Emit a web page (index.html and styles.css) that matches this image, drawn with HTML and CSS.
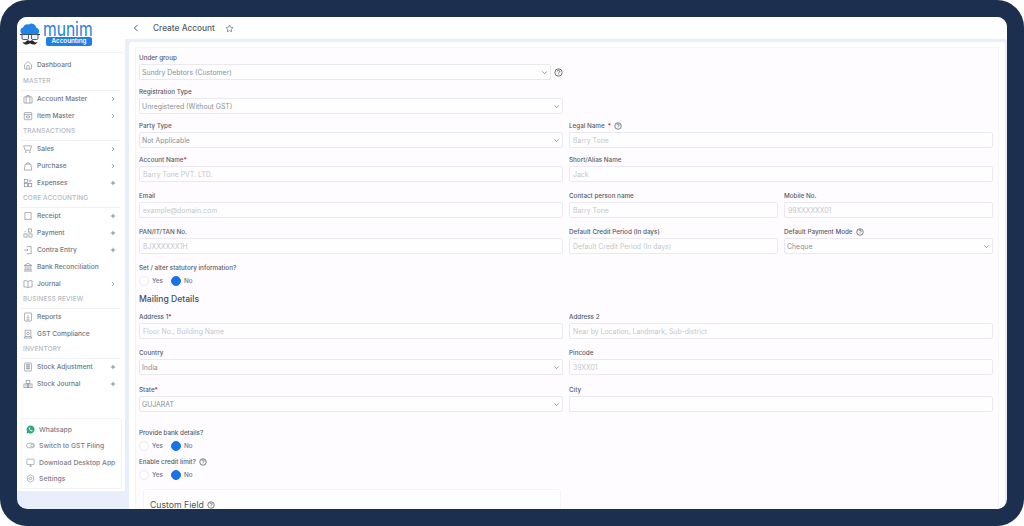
FILE: index.html
```html
<!DOCTYPE html>
<html lang="en">
<head>
<meta charset="utf-8">
<title>Create Account</title>
<link rel="stylesheet" href="styles.css">
</head>
<body>
<svg class="defs" width="0" height="0" aria-hidden="true">
  <defs>
    <symbol id="i-home" viewBox="0 0 16 16"><path d="M2.500 7.500 8 2.500l5.500 5v6a1 1 0 0 1-1 1h-9a1 1 0 0 1-1-1z"/><path d="M6 14v-3.500a2 2 0 0 1 4 0V14"/></symbol>
    <symbol id="i-account" viewBox="0 0 16 16"><rect x="1.500" y="4.500" width="13" height="10" rx="1"/><path d="M5 4.500v10M11 4.500v10M6 4.500V2.500h4v2"/></symbol>
    <symbol id="i-item" viewBox="0 0 16 16"><rect x="2" y="2.500" width="12" height="11.500" rx="1"/><path d="M2 5.500h12M5.500 8h5v3h-5z"/></symbol>
    <symbol id="i-cart" viewBox="0 0 16 16"><path d="M1 3h12.500l-1.500 7H3.500z"/><circle cx="4.500" cy="13" r=".8"/><circle cx="11" cy="13" r=".8"/></symbol>
    <symbol id="i-bag" viewBox="0 0 16 16"><path d="M3.500 5h9l1.500 9.500H2z"/><path d="M5.500 5a2.500 2.500 0 0 1 5 0"/></symbol>
    <symbol id="i-exp" viewBox="0 0 16 16"><rect x="2" y="2" width="5" height="5"/><rect x="2" y="9" width="5" height="5"/><rect x="9" y="9" width="5" height="5"/><path d="M9 3.500h5M9 6h4"/></symbol>
    <symbol id="i-receipt" viewBox="0 0 16 16"><path d="M3 2.500h10v11.500l-2-1-3 1-3-1-2 1z"/></symbol>
    <symbol id="i-pay" viewBox="0 0 16 16"><rect x="8.500" y="1.500" width="5" height="5"/><rect x="1.500" y="9.500" width="5" height="5"/><rect x="9.500" y="9.500" width="5" height="5"/><path d="M2 7l3-3"/></symbol>
    <symbol id="i-contra" viewBox="0 0 16 16"><path d="M6 2.500h7v11.500H6"/><path d="M2 8h6M6 6l2 2-2 2"/></symbol>
    <symbol id="i-bank" viewBox="0 0 16 16"><path d="M2 5.500 8 2l6 3.500zM3.500 6v6M6.500 6v6M9.500 6v6M12.500 6v6M2 12.500h12M1.500 14.500h13"/></symbol>
    <symbol id="i-book" viewBox="0 0 16 16"><path d="M8 4c-1.500-1.200-4-1.500-6.500-1.200v10c2.500-.3 5 0 6.500 1.200 1.500-1.200 4-1.500 6.500-1.200v-10C12 2.500 9.500 2.800 8 4zM8 4v10"/></symbol>
    <symbol id="i-report" viewBox="0 0 16 16"><rect x="2.500" y="1.500" width="11" height="13" rx="1"/><path d="M8 5v5M6 8.500 8 10.500l2-2M5.500 12.500h5"/></symbol>
    <symbol id="i-gst" viewBox="0 0 16 16"><path d="M3.500 13V2h9v11"/><circle cx="8" cy="7" r="2"/><path d="M1.500 14.500h13l-2-2.500h-9z"/></symbol>
    <symbol id="i-stock" viewBox="0 0 16 16"><rect x="2.500" y="1.500" width="11" height="13" rx="1.500"/><path d="M5 4.500h6M5 7.500h6M5 10.500h6M6.500 3v9M9.500 3v9"/></symbol>
    <symbol id="i-journal" viewBox="0 0 16 16"><rect x="5" y="2" width="6" height="5"/><rect x="1.500" y="8" width="6" height="6"/><rect x="8.500" y="8" width="6" height="6"/><path d="M3 11h3M10 11h3"/></symbol>
    <symbol id="i-right" viewBox="0 0 16 16"><path d="m5.500 3 5 5-5 5"/></symbol>
    <symbol id="i-plus" viewBox="0 0 16 16"><path d="M8 2v12M2 8h12"/></symbol>
    <symbol id="i-down" viewBox="0 0 16 16"><path d="m3 5.500 5 5 5-5"/></symbol>
    <symbol id="i-help" viewBox="0 0 16 16"><circle cx="8" cy="8" r="6.500"/><path d="M5.800 6.200a2.200 2.200 0 1 1 3.300 1.900c-.7.400-1.100.8-1.100 1.600M8 11.300v.7"/></symbol>
    <symbol id="i-toggle" viewBox="0 0 16 16"><rect x="1" y="4" width="14" height="8" rx="4"/><circle cx="11" cy="8" r="2.500"/></symbol>
    <symbol id="i-monitor" viewBox="0 0 16 16"><rect x="1.500" y="2" width="13" height="9.500" rx="1"/><path d="M5 14.500h6M8 11.500v3"/></symbol>
    <symbol id="i-gear" viewBox="0 0 16 16"><path d="M8 1.500 13.500 4.500v7L8 14.500 2.500 11.500v-7z"/><circle cx="8" cy="8" r="2.200"/></symbol>
  </defs>
</svg>
<div class="frame">
  <div class="app">
    <aside class="side">
      <div class="side-panel">
        <div class="logo">
          <svg class="logo-mark" viewBox="0 0 20 24" aria-hidden="true">
            <path class="m-cloud" d="M3.800 12.500a3.500 3.500 0 0 1-.7-6.900 4.300 4.300 0 0 1 5.700-3.100 4.700 4.700 0 0 1 7.500 3.200 3.500 3.500 0 0 1 .4 6.800z"/>
            <path class="m-bar" d="M0 12.500h20"/>
            <rect class="m-glass" x="2" y="12.500" width="6.500" height="5" rx="1.200"/>
            <rect class="m-glass" x="11.500" y="12.500" width="6.500" height="5" rx="1.200"/>
            <path class="m-stache" d="M10 19.200c1.200-1.400 2.800-1.400 3.700.1.800 1.300 2.500 1.500 3.800.4-.7 2.900-4.500 3.900-7.500 1.500-3 2.400-6.800 1.400-7.500-1.500 1.300 1.100 3 .9 3.800-.4.900-1.500 2.500-1.500 3.700-.1z"/>
          </svg>
          <div class="logo-text">
            <span class="logo-name">munim</span>
            <span class="logo-badge">Accounting</span>
          </div>
        </div>
        <nav class="nav">
          <a class="nav-row"><svg class="ic"><use href="#i-home"/></svg><span class="nav-text">Dashboard</span></a>
          <div class="nav-head">MASTER</div>
          <a class="nav-row"><svg class="ic"><use href="#i-account"/></svg><span class="nav-text">Account Master</span><svg class="act"><use href="#i-right"/></svg></a>
          <a class="nav-row"><svg class="ic"><use href="#i-item"/></svg><span class="nav-text">Item Master</span><svg class="act"><use href="#i-right"/></svg></a>
          <div class="nav-head">TRANSACTIONS</div>
          <a class="nav-row"><svg class="ic"><use href="#i-cart"/></svg><span class="nav-text">Sales</span><svg class="act"><use href="#i-right"/></svg></a>
          <a class="nav-row"><svg class="ic"><use href="#i-bag"/></svg><span class="nav-text">Purchase</span><svg class="act"><use href="#i-right"/></svg></a>
          <a class="nav-row"><svg class="ic"><use href="#i-exp"/></svg><span class="nav-text">Expenses</span><svg class="act"><use href="#i-plus"/></svg></a>
          <div class="nav-head">CORE ACCOUNTING</div>
          <a class="nav-row"><svg class="ic"><use href="#i-receipt"/></svg><span class="nav-text">Receipt</span><svg class="act"><use href="#i-plus"/></svg></a>
          <a class="nav-row"><svg class="ic"><use href="#i-pay"/></svg><span class="nav-text">Payment</span><svg class="act"><use href="#i-plus"/></svg></a>
          <a class="nav-row"><svg class="ic"><use href="#i-contra"/></svg><span class="nav-text">Contra Entry</span><svg class="act"><use href="#i-plus"/></svg></a>
          <a class="nav-row"><svg class="ic"><use href="#i-bank"/></svg><span class="nav-text">Bank Reconciliation</span></a>
          <a class="nav-row"><svg class="ic"><use href="#i-book"/></svg><span class="nav-text">Journal</span><svg class="act"><use href="#i-right"/></svg></a>
          <div class="nav-head">BUSINESS REVIEW</div>
          <a class="nav-row"><svg class="ic"><use href="#i-report"/></svg><span class="nav-text">Reports</span></a>
          <a class="nav-row"><svg class="ic"><use href="#i-gst"/></svg><span class="nav-text">GST Compliance</span></a>
          <div class="nav-head">INVENTORY</div>
          <a class="nav-row"><svg class="ic"><use href="#i-stock"/></svg><span class="nav-text">Stock Adjustment</span><svg class="act"><use href="#i-plus"/></svg></a>
          <a class="nav-row"><svg class="ic"><use href="#i-journal"/></svg><span class="nav-text">Stock Journal</span><svg class="act"><use href="#i-plus"/></svg></a>
        </nav>
        <div class="side-foot">
          <a class="foot-row"><svg class="ic-wa" viewBox="0 0 16 16" aria-hidden="true"><path d="M8 1a7 7 0 0 0-6 10.500L1 15l3.600-1A7 7 0 1 0 8 1z"/><path class="wa-in" d="M5.500 4.500c-1 1-.8 2.700.7 4.500s3.200 2.800 4.600 2.200c.8-.4 1-1 1-1.500L10.200 8.800l-.9.900c-1-.4-2-1.400-2.500-2.600l.8-.8-.8-1.900z"/></svg><span>Whatsapp</span></a>
          <a class="foot-row"><svg class="ic"><use href="#i-toggle"/></svg><span>Switch to GST Filing</span></a>
          <a class="foot-row"><svg class="ic"><use href="#i-monitor"/></svg><span>Download Desktop App</span></a>
          <a class="foot-row"><svg class="ic"><use href="#i-gear"/></svg><span>Settings</span></a>
        </div>
      </div>
    </aside>
    <main class="main">
      <header class="top">
        <svg class="top-back"><use href="#i-right"/></svg>
        <h1 class="top-title">Create Account</h1>
        <svg class="top-star" viewBox="0 0 16 16" aria-hidden="true"><path d="m8 1.800 1.900 4 4.400.6-3.200 3 .8 4.400L8 11.700l-3.900 2.100.8-4.400-3.200-3 4.400-.6z"/></svg>
      </header>
      <div class="card">
        <form class="form">
          <div class="grid">
            <div class="field">
              <label class="lbl">Under group</label>
              <div class="with-help">
                <div class="ctl sel"><span>Sundry Debtors (Customer)</span><svg class="chev"><use href="#i-down"/></svg></div>
                <svg class="help"><use href="#i-help"/></svg>
              </div>
            </div>
          </div>
          <div class="grid">
            <div class="field">
              <label class="lbl">Registration Type</label>
              <div class="ctl sel"><span>Unregistered (Without GST)</span><svg class="chev"><use href="#i-down"/></svg></div>
            </div>
          </div>
          <div class="grid">
            <div class="field">
              <label class="lbl">Party Type</label>
              <div class="ctl sel"><span>Not Applicable</span><svg class="chev"><use href="#i-down"/></svg></div>
            </div>
            <div class="field">
              <label class="lbl">Legal Name <b class="req req-gap">*</b><svg class="help-sm"><use href="#i-help"/></svg></label>
              <div class="ctl ph"><span>Barry Tone</span></div>
            </div>
          </div>
          <div class="grid">
            <div class="field">
              <label class="lbl">Account Name<b class="req">*</b></label>
              <div class="ctl ph"><span>Barry Tone PVT. LTD.</span></div>
            </div>
            <div class="field">
              <label class="lbl">Short/Alias Name</label>
              <div class="ctl ph"><span>Jack</span></div>
            </div>
          </div>
          <div class="grid wide">
            <div class="field">
              <label class="lbl">Email</label>
              <div class="ctl ph"><span>example@domain.com</span></div>
            </div>
            <div class="sub">
              <div class="field">
                <label class="lbl">Contact person name</label>
                <div class="ctl ph"><span>Barry Tone</span></div>
              </div>
              <div class="field">
                <label class="lbl">Mobile No.</label>
                <div class="ctl ph"><span>99XXXXXX01</span></div>
              </div>
            </div>
          </div>
          <div class="grid wide">
            <div class="field">
              <label class="lbl">PAN/IT/TAN No.</label>
              <div class="ctl ph"><span>BJXXXXXX1H</span></div>
            </div>
            <div class="sub">
              <div class="field">
                <label class="lbl">Default Credit Period (In days)</label>
                <div class="ctl ph"><span>Default Credit Period (In days)</span></div>
              </div>
              <div class="field">
                <label class="lbl">Default Payment Mode<svg class="help-sm"><use href="#i-help"/></svg></label>
                <div class="ctl sel"><span>Cheque</span><svg class="chev"><use href="#i-down"/></svg></div>
              </div>
            </div>
          </div>
          <div class="radio-field wide">
            <label class="lbl">Set / alter statutory information?</label>
            <div class="radios"><span class="radio"></span><span class="radio-text">Yes</span><span class="radio on"></span><span class="radio-text">No</span></div>
          </div>
          <h2 class="sec">Mailing Details</h2>
          <div class="grid addr">
            <div class="field">
              <label class="lbl">Address 1<b class="req">*</b></label>
              <div class="ctl ph"><span>Floor No., Building Name</span></div>
            </div>
            <div class="field">
              <label class="lbl">Address 2</label>
              <div class="ctl ph"><span>Near by Location, Landmark, Sub-district</span></div>
            </div>
          </div>
          <div class="grid wide-b">
            <div class="field">
              <label class="lbl">Country</label>
              <div class="ctl sel"><span>India</span><svg class="chev"><use href="#i-down"/></svg></div>
            </div>
            <div class="field">
              <label class="lbl">Pincode</label>
              <div class="ctl ph"><span>39XX01</span></div>
            </div>
          </div>
          <div class="grid wide-b state">
            <div class="field">
              <label class="lbl">State<b class="req">*</b></label>
              <div class="ctl sel"><span>GUJARAT</span><svg class="chev"><use href="#i-down"/></svg></div>
            </div>
            <div class="field">
              <label class="lbl">City</label>
              <div class="ctl ph"></div>
            </div>
          </div>
          <div class="radio-field bank">
            <label class="lbl">Provide bank details?</label>
            <div class="radios"><span class="radio"></span><span class="radio-text">Yes</span><span class="radio on"></span><span class="radio-text">No</span></div>
          </div>
          <div class="radio-field credit">
            <label class="lbl">Enable credit limit?<svg class="help-sm"><use href="#i-help"/></svg></label>
            <div class="radios"><span class="radio"></span><span class="radio-text">Yes</span><span class="radio on"></span><span class="radio-text">No</span></div>
          </div>
          <section class="custom">
            <h2 class="custom-title">Custom Field<svg class="help-md"><use href="#i-help"/></svg></h2>
          </section>
        </form>
      </div>
    </main>
  </div>
</div>
</body>
</html>
```

FILE: styles.css
```css
* { box-sizing: border-box; }
html, body { margin: 0; height: 100%; background: #fff; overflow: hidden; }
body { font-family: Inter, "Liberation Sans", sans-serif; color: #4b5563; }
.defs { position: absolute; }

.frame { height: 526px; padding: 17px; background: #1c2f4e; border-radius: 27px; }
.app { display: flex; height: 492px; background: #e9eefb; border-radius: 10px; overflow: hidden; }

/* sidebar */
.side { width: 108px; flex: none; }
.side-panel { height: 474px; background: #fff; display: flex; flex-direction: column; }
.logo { height: 36px; padding: 5px 0 0 3px; display: flex; gap: 3px; border-bottom: 1px solid #f2f3f6; flex: none; }
.logo-mark { width: 20px; height: 24px; }
.m-cloud { fill: #2283e4; }
.m-bar { stroke: #2c3c52; stroke-width: 1; }
.m-glass { fill: #e6f1fb; stroke: #39495e; stroke-width: .9; }
.m-stache { fill: #28282c; }
.logo-text { display: flex; flex-direction: column; align-items: flex-start; width: 50px; }
.logo-name { height: 16px; margin-top: -1px; font-size: 20px; font-weight: 400; line-height: 17px; color: #1a7fe0; transform: scaleX(.78); transform-origin: left center; }
.logo-badge { width: 46px; height: 9px; margin-left: 3px; background: #1d80e6; border-radius: 2px; color: #fff; font-size: 6.300px; font-weight: 600; line-height: 9px; text-align: center; }
.nav { padding: 4px 5px 0 3px; flex: 1; }
.nav-row { display: flex; align-items: center; height: 16.790px; padding-left: 3px; font-size: 6.600px; font-weight: 500; color: #72767e; }
.ic { width: 10px; height: 10px; flex: none; margin-right: 4px; fill: none; stroke: #7b8490; stroke-width: 1; }
.nav-text { flex: 1; white-space: nowrap; }
.act { width: 6px; height: 6px; flex: none; margin-right: 4px; fill: none; stroke: #596270; stroke-width: 1.800; }
.nav-head { height: 16.790px; padding: 2px 0 0 3px; border-bottom: 1px solid #f1f2f5; font-size: 6.400px; line-height: 10px; color: #b2b7bf; font-weight: 500; letter-spacing: .15px; white-space: nowrap; }
.side-foot { margin: 0 3px 2px 4px; height: 71px; border: 1px solid #f3f4f6; border-radius: 2px; padding: 2px 0 0 4px; flex: none; }
.foot-row { display: flex; align-items: center; height: 16.500px; font-size: 6.800px; font-weight: 500; color: #7c8088; white-space: nowrap; }
.foot-row .ic { width: 9px; height: 9px; }
.ic-wa { width: 9px; height: 9px; margin-right: 4px; fill: #2ba982; flex: none; }
.wa-in { fill: #fff; }

/* main */
.main { flex: 1; min-width: 0; display: flex; flex-direction: column; }
.top { height: 22px; flex: none; background: #fff; display: flex; align-items: center; }
.top-back { width: 10px; height: 10px; margin-left: 6px; fill: none; stroke: #4b5563; stroke-width: 1.500; transform: scaleX(-1); }
.top-title { margin: 0 0 0 12px; font-size: 8.300px; font-weight: 500; color: #555d68; line-height: 12px; }
.top-star { width: 9px; height: 9px; margin-left: 10px; fill: none; stroke: #56606c; stroke-width: 1.100; }
.card { flex: 1; margin: 3px 2px 0 4px; padding: 5px 6px 0; background: #fff; border-radius: 3px 3px 0 0; min-height: 0; }
.form { height: 100%; padding: 4px 5px 0 3px; background: #fefcfe; border: 1px solid #f6f5f9; border-bottom: 0; overflow: hidden; }

.grid { display: grid; grid-template-columns: 1fr 1fr; column-gap: 6px; margin-bottom: 6px; }
.sub { display: grid; grid-template-columns: 1fr 1fr; column-gap: 6px; }
.wide, .grid.wide { margin-top: 8px; margin-bottom: 0; }
.grid.addr { margin-top: 1px; margin-bottom: 0; }
.grid.wide-b { margin-top: 8px; margin-bottom: 0; }
.grid.state { margin-top: 9px; }
.lbl { display: flex; align-items: center; height: 11px; padding-top: 1px; margin-bottom: 1px; font-size: 6.300px; font-weight: 500; color: #555d68; white-space: nowrap; }
.req { color: #d8232a; font-weight: 600; }
.req-gap { margin-left: 3px; }
.with-help { display: flex; align-items: center; }
.with-help .ctl { flex: 1; }
.ctl { display: flex; align-items: center; justify-content: space-between; height: 16px; padding: 0 2px 0 3px; background: #fffefe; border: 1px solid #ebe9ef; border-radius: 2px; font-size: 6.900px; white-space: nowrap; }
.sel { padding-left: 2px; color: #8a8f97; }
.ph { color: #c4c6cc; padding-left: 3px; }
.chev { width: 7px; height: 7px; fill: none; stroke: #5d6671; stroke-width: 1.500; }
.help { width: 9px; height: 9px; margin: 0 0 0 3px; flex: none; fill: none; stroke: #46505b; stroke-width: 1.400; }
.help-sm { width: 8px; height: 8px; margin-left: 3px; flex: none; fill: none; stroke: #46505b; stroke-width: 1.400; }
.help-md { width: 8px; height: 8px; margin-left: 3px; flex: none; fill: none; stroke: #46505b; stroke-width: 1.400; }

.radios { display: flex; align-items: center; height: 11px; font-size: 6.300px; font-weight: 500; color: #72767e; margin-top: 2px; }
.radio { width: 10px; height: 10px; border: 1px solid #e9e9ee; border-radius: 50%; background: #fff; }
.radio.on { background: #1872e8; border-color: #1872e8; }
.radio-text { margin: 0 8px 0 3px; }
.sec { margin: 7px 0 6px; font-size: 8.600px; font-weight: 500; line-height: 12px; color: #47505c; }
.radio-field.bank { margin-top: 15px; }
.radio-field.credit { margin-top: 5px; }
.custom { width: 418px; margin: 9px 0 0 4px; height: 40px; padding: 8px 6px; background: #fff; border: 1px solid #f3f2f6; border-radius: 3px; }
.custom-title { display: flex; align-items: center; margin: 0; font-size: 8.700px; font-weight: 400; line-height: 14px; color: #4d5661; }
```
